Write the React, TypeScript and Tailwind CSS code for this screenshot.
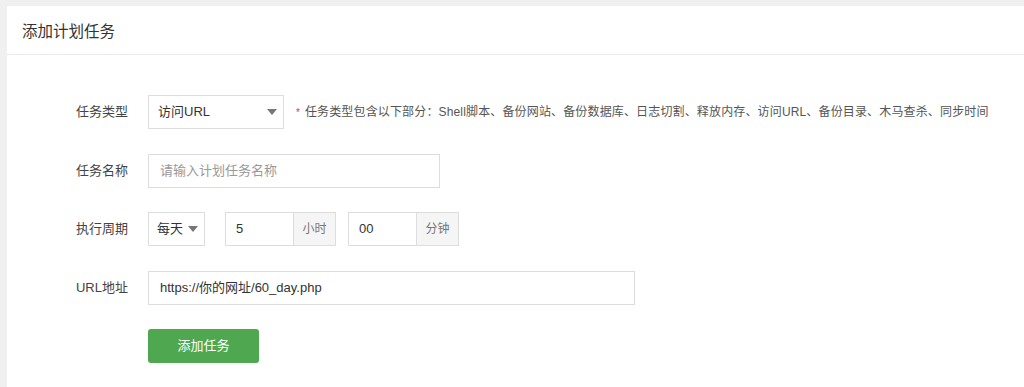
const Caret = () => (
  <svg width="10" height="6" viewBox="0 0 10 6" className="shrink-0">
    <path d="M0 0h10L5 6z" fill="#777" />
  </svg>
);

const Row = ({ label, children }: { label: string; children: React.ReactNode }) => (
  <div className="flex items-center h-[34px] mb-[24.5px]">
    <label className="w-[80px] text-right text-[13px] text-[#444] shrink-0">{label}</label>
    <div className="ml-5 flex items-center">{children}</div>
  </div>
);

const App = () => {
  return (
    <div
      className="w-[1024px] h-[387px] bg-[#f0f0f0] pt-[6px] pl-[7px] overflow-hidden"
      style={{ fontFamily: '"Liberation Sans", "Noto Sans CJK SC", sans-serif' }}
    >
      <div className="bg-white h-full">
        <div className="h-[49px] flex items-center pl-[15px] pt-[3px] border-b border-[#ebebeb]">
          <h1 className="text-[15.5px] text-[#333]">添加计划任务</h1>
        </div>

        <div className="pt-[40px] pl-[41px]">
          <Row label="任务类型">
            <div className="w-[136px] h-[34px] border border-[#ddd] flex items-center justify-between pl-[9px] pr-[6px] text-[13px] text-[#333]">
              <span>访问URL</span>
              <Caret />
            </div>
            <span className="ml-3 text-[#e4393c] text-[10px]">*</span>
            <span className="ml-[5px] text-[12px] tracking-[0.15px] text-[#555]">
              任务类型包含以下部分：Shell脚本、备份网站、备份数据库、日志切割、释放内存、访问URL、备份目录、木马查杀、同步时间
            </span>
          </Row>

          <Row label="任务名称">
            <div className="w-[292px] h-[34px] border border-[#ddd] flex items-center px-[11px] text-[13px] text-[#999]">
              请输入计划任务名称
            </div>
          </Row>

          <Row label="执行周期">
            <div className="w-[57px] h-[34px] border border-[#ddd] flex items-center justify-between pl-[8px] pr-[6px] text-[13px] text-[#333]">
              <span>每天</span>
              <Caret />
            </div>
            <div className="ml-5 flex h-[34px] border border-[#ddd]">
              <div className="w-[67px] flex items-center pl-[10px] text-[13px] text-[#333]">5</div>
              <div className="w-[42px] flex items-center justify-center bg-[#f5f5f5] border-l border-[#ddd] text-[12px] text-[#777]">
                小时
              </div>
            </div>
            <div className="ml-3 flex h-[34px] border border-[#ddd]">
              <div className="w-[67px] flex items-center pl-[10px] text-[13px] text-[#333]">00</div>
              <div className="w-[42px] flex items-center justify-center bg-[#f5f5f5] border-l border-[#ddd] text-[12px] text-[#777]">
                分钟
              </div>
            </div>
          </Row>

          <Row label="URL地址">
            <div className="w-[487px] h-[34px] border border-[#ddd] flex items-center px-[11px] text-[13px] text-[#333]">
              https://你的网址/60_day.php
            </div>
          </Row>

          <div className="pl-[100px]">
            <button className="w-[111px] h-[34px] rounded-[3px] bg-[#4fa84f] text-white text-[13px]">
              添加任务
            </button>
          </div>
        </div>
      </div>
    </div>
  );
};

export default App;
